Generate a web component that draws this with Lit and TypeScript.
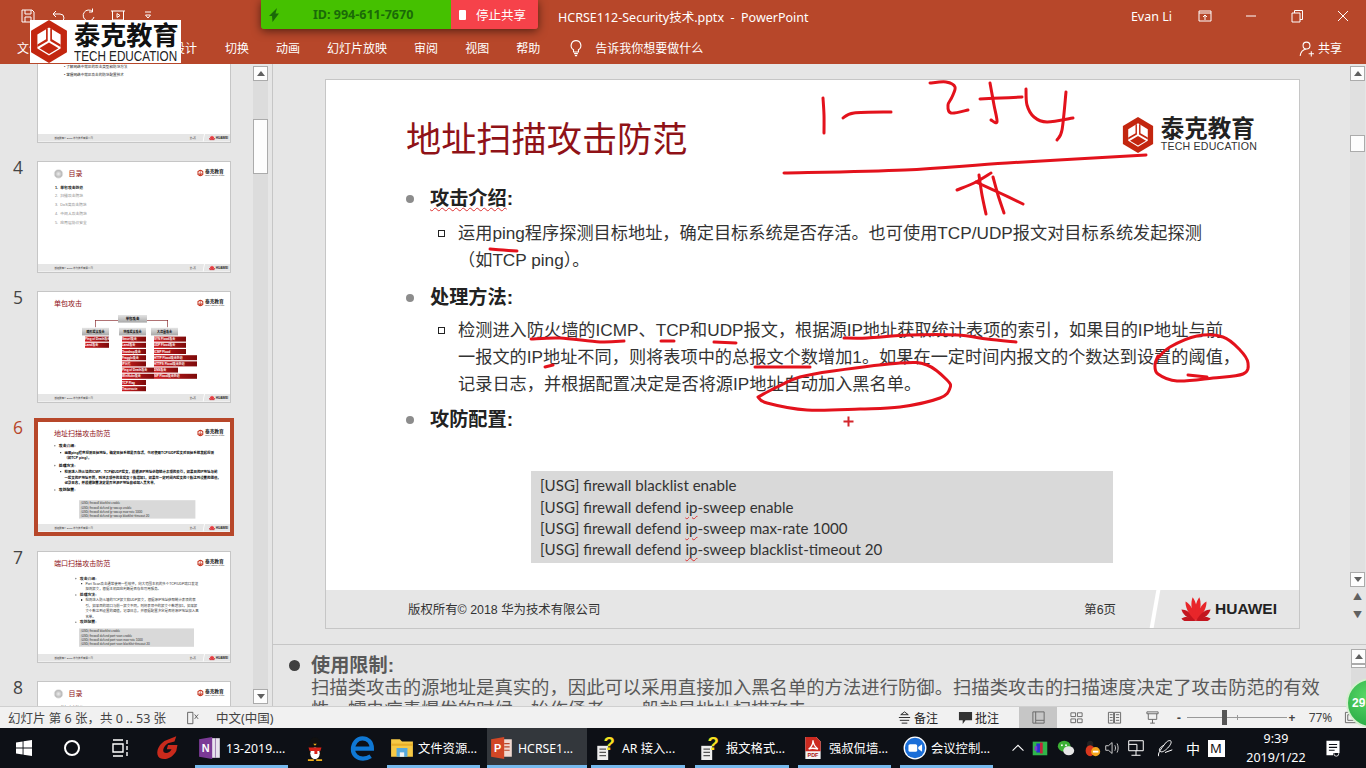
import { LitElement, html, css, svg } from 'lit';
import { customElement, property } from 'lit/decorators.js';

const SANS = css`'Liberation Sans', 'Noto Sans CJK SC', sans-serif`;

// ---- small svg helpers ----
const line = (d: string, size = 16, w = 1) => html`<svg width=${size} height=${size} viewBox="0 0 16 16" fill="none" stroke="currentColor" stroke-width=${w}><path d=${d}></path></svg>`;

const petals = [[-80, 8], [-52, 10], [-28, 12], [-8, 13], [8, 13], [28, 12], [52, 10], [80, 8]];
const huaweiMark = () => html`<svg class="flower" viewBox="-16 -24 32 24">
  ${petals.map(([a, l]) => svg`<path transform="rotate(${a})" d="M0 0C-4 -${l * 0.9} -2.600 -${l * 1.5} 0 -${l * 1.85}C2.600 -${l * 1.5} 4 -${l * 0.9} 0 0Z" fill=${Math.abs(a) > 40 ? '#c3161f' : '#e8262a'}></path>`)}
</svg>`;

const hexMark = () => html`<svg class="hex" viewBox="0 0 36 40" preserveAspectRatio="none">
  <path d="M18 0L35 10V30L18 40L1 30V10Z" fill="#c3260f"></path>
  <path d="M18 7L29 13.5V26.500L18 33L7 26.500V13.500Z" fill="#fff"></path>
  <path d="M16.800 8V19.500L7 25V22.800L15.200 18V8ZM19.200 8V19.500L29 25V22.800L20.800 18V8Z" fill="#c3260f"></path>
  <path d="M18 21L27 26.300L18 31.600L9 26.300Z" fill="#c3260f"></path>
</svg>`;

const brand = () => html`<div class="brand">${hexMark()}<div><div class="cn">泰克教育</div><div class="en">TECH EDUCATION</div></div></div>`;

// ---- one slide, used for the big canvas and for the thumbnails ----
const orgCols = [
  { head: '畸形报文攻击', w: [120, 120], items: ['Ping of Death攻击', 'Land攻击'] },
  { head: '特殊报文攻击', w: [120, 120, 120, 120, 120, 160, 160, 120, 120], items: ['Smurf攻击', 'Land攻击', 'Teardrop攻击', 'Fraggle攻击', 'IP分片', 'Ping of Death攻击', 'WinNuke攻击', 'TCP Flag', 'Traceroute'] },
  { head: '大流量攻击', w: [160, 160, 160, 215, 215, 120, 215], items: ['SYN Flood攻击', 'UDP Flood攻击', 'ICMP Flood', 'HTTP Flood攻击防范', 'HTTPS Flood攻击防范', 'DNS攻击', 'SIP Flood攻击防范'] },
];

@customElement('slide-view')
export class SlideView extends LitElement {
  @property() kind = 'main';
  @property({ type: Number }) page = 6;
  @property({ type: Boolean, reflect: true }) heavy = false;

  static styles = css`
    :host { display: block; }
    .slide { width: 973px; height: 548px; background: #fff; display: flex; flex-direction: column; font-family: ${SANS}; color: #2e2e2e; }
    .head { height: 105px; flex: none; display: flex; justify-content: space-between; align-items: center; padding: 0 42px 0 80px; box-sizing: border-box; }
    h1 { margin: 14px 0 0; font-size: 35.200px; font-weight: 400; color: #8f1217; line-height: 48px; }
    .brand { display: flex; align-items: center; gap: 7px; margin-top: 4px; }
    .hex { width: 32px; height: 36px; display: block; }
    .cn { font-size: 23.500px; font-weight: 700; color: #222; line-height: 24px; }
    .en { font-size: 10.600px; color: #333; line-height: 11px; letter-spacing: 0.2px; white-space: nowrap; }
    .body { flex: 1; min-height: 0; padding-left: 80px; }
    .t { position: relative; font-size: 19.200px; font-weight: 700; line-height: 27px; padding-left: 24px; color: #222; }
    .t::before { content: ''; position: absolute; left: 0; top: 10px; width: 8px; height: 8px; border-radius: 50%; background: #8c8c8c; }
    .p { position: relative; font-size: 17.200px; line-height: 27.300px; padding-left: 52px; color: #333; white-space: nowrap; }
    .p::before { content: ''; position: absolute; left: 32px; top: 10px; width: 5px; height: 5px; border: 1.500px solid #222; }
    :host([heavy]) .p, :host([heavy]) .t { font-weight: 700; color: #000; }
    .mt8 { margin-top: 8px; }
    .mt9 { margin-top: 9px; }
    .mt6 { margin-top: 6px; }
    .sp { text-decoration: underline wavy #d33; text-decoration-thickness: 1px; text-underline-offset: 2px; }
    .code { margin: 0 0 0 125px; width: 582px; height: 92px; box-sizing: border-box; padding: 4px 9px; background: #d9d9d9; font: 15.100px/21.300px Lato, 'Liberation Sans', sans-serif; color: #333; }
    .foot { height: 38px; flex: none; margin-top: auto; display: flex; align-items: center; background: #e6e6e6; padding: 0 22px 0 82px; font-size: 12.400px; color: #333; box-sizing: border-box; }
    .pg { margin-left: auto; margin-right: 37px; }
    .slash { width: 4px; height: 38px; background: #fff; transform: skewX(-10deg); margin-right: 23px; }
    .flower { width: 32px; height: 24px; display: block; }
    .hw { font-weight: 700; font-size: 15.500px; margin-left: 3px; color: #222; }
    .gap { margin-top: 38px; }
    .narrow { padding: 14px 0 0 185px; }
    .narrow .code { margin: 18px 0 0 20px; width: 575px; }
    .narrow .p { white-space: normal; width: 570px; }
    .toc { display: flex; align-items: center; gap: 28px; margin-top: 14px; }
    .toc i { display: block; width: 45px; height: 45px; border-radius: 50%; background: radial-gradient(#eee, #999); border: 3px solid #ccc; box-sizing: border-box; }
    .toc h1 { margin: 0; font-size: 35px; }
    .items { padding: 0 0 0 85px; font-size: 19px; line-height: 44px; color: #888; }
    .items div:first-child { color: #111; font-weight: 700; }
    .intro { padding: 155px 0 0 130px; font-size: 18px; line-height: 40px; color: #222; }
    .org { position: relative; padding: 10px 0 0 220px; }
    .org .rail { position: absolute; left: 285px; top: 35px; width: 365px; height: 36px; border: 3px solid #7c1418; border-bottom: 0; box-sizing: border-box; }
    .org .root, .org .hd { background: linear-gradient(#e4e4e4, #a8a8a8); font-size: 17px; font-weight: 700; color: #000; text-align: center; line-height: 38px; position: relative; }
    .org .root { width: 145px; margin: 0 0 26px 180px; }
    .cols { display: flex; gap: 50px; }
    .col { width: 135px; }
    .col:nth-child(2) { margin-right: -25px; }
    .col .hd { margin-bottom: 6px; white-space: nowrap; font-size: 15px; }
    .bar { height: 25px; margin: 0 0 6px 15px; background: linear-gradient(90deg, #d11f24, #7d0a0a); color: #fff; font-size: 15px; line-height: 25px; font-weight: 700; white-space: nowrap; overflow: hidden; }
  `;

  private foot() {
    return html`<div class="foot">
      <span>版权所有© 2018 华为技术有限公司</span><span class="pg">第${this.page}页</span><div class="slash"></div>
      ${huaweiMark()}<span class="hw">HUAWEI</span>
    </div>`;
  }

  private mainBody() {
    return html`<div class="body">
      <div class="t"><span class="sp">攻击介绍</span>:</div>
      <div class="p mt8">运用ping程序探测目标地址，确定目标系统是否存活。也可使用TCP/UDP报文对目标系统发起探测<br />（如TCP ping）。</div>
      <div class="t mt9">处理方法:</div>
      <div class="p mt6">检测进入防火墙的ICMP、TCP和UDP报文，根据源IP地址获取统计表项的索引，如果目的IP地址与前<br />一报文的IP地址不同，则将表项中的总报文个数增加1。如果在一定时间内报文的个数达到设置的阈值，<br />记录日志，并根据配置决定是否将源IP地址自动加入黑名单。</div>
      <div class="t mt8">攻防配置:</div>
      <div class="code gap">
        <div>[USG] firewall blacklist enable</div>
        <div>[USG] firewall defend <span class="sp">ip</span>-sweep enable</div>
        <div>[USG] firewall defend <span class="sp">ip</span>-sweep max-rate 1000</div>
        <div>[USG] firewall defend <span class="sp">ip</span>-sweep blacklist-timeout 20</div>
      </div>
    </div>`;
  }

  private portBody() {
    return html`<div class="body narrow">
      <div class="t">攻击介绍:</div>
      <div class="p">Port Scan攻击通常使用一些软件，向大范围主机的多个TCP/UDP端口发送探测报文，根据主机回应判断是否存在可用服务。</div>
      <div class="t">处理方法:</div>
      <div class="p">检测进入防火墙的TCP报文和UDP报文，根据源IP地址获取统计表项的索引，如果目的端口与前一报文不同，则将表项中的报文个数增加1，如果报文个数达到设置的阈值，记录日志，并根据配置决定是否将源IP地址加入黑名单。</div>
      <div class="t">攻防配置:</div>
      <div class="code">
        <div>[USG] firewall blacklist enable</div>
        <div>[USG] firewall defend port-scan enable</div>
        <div>[USG] firewall defend port-scan max-rate 1000</div>
        <div>[USG] firewall defend port-scan blacklist-timeout 20</div>
      </div>
    </div>`;
  }

  private orgBody() {
    return html`<div class="body" style="padding-left:0"><div class="org">
      <div class="rail"></div>
      <div class="root">单包攻击</div>
      <div class="cols">
        ${orgCols.map((c) => html`<div class="col"><div class="hd">${c.head}</div>
          ${c.items.map((it, i) => html`<div class="bar" style="width:${c.w[i]}px">${it}</div>`)}</div>`)}
      </div>
    </div></div>`;
  }

  render() {
    const k = this.kind;
    const titles: Record<string, string> = { main: '地址扫描攻击防范', port: '端口扫描攻击防范', org: '单包攻击' };
    return html`<div class="slide">
      ${k === 'intro'
        ? html`<div class="intro"><div>• 了解网络中常见的攻击类型和防范方法</div><div>• 掌握网络中常见攻击的防范配置技术</div></div>`
        : html`<div class="head">
            ${k === 'toc' ? html`<div class="toc"><i></i><h1>目录</h1></div>` : html`<h1>${titles[k]}</h1>`}
            ${brand()}
          </div>`}
      ${k === 'main' ? this.mainBody() : ''}
      ${k === 'port' ? this.portBody() : ''}
      ${k === 'org' ? this.orgBody() : ''}
      ${k === 'toc' ? html`<div class="items"><div>1.&nbsp;&nbsp;单包攻击防范</div><div>2.&nbsp;&nbsp;扫描攻击防范</div><div>3.&nbsp;&nbsp;DoS类攻击防范</div><div>4.&nbsp;&nbsp;中间人攻击防范</div><div>5.&nbsp;&nbsp;应用层协议安全</div></div>` : ''}
      ${this.foot()}
    </div>`;
  }
}

// ---- handwritten pen strokes over the slide ----
const ink: number[][][] = [
  [[823, 98], [824, 115], [824, 133]],
  [[843, 118], [854, 113], [891, 112]],
  [[930, 83], [946, 82], [955, 87], [952, 97], [948, 105], [951, 113], [968, 110]],
  [[980, 99], [1001, 98], [1022, 97]],
  [[990, 83], [994, 105], [997, 122], [991, 120]],
  [[1026, 89], [1027, 105], [1034, 117], [1047, 122], [1073, 118]],
  [[1066, 92], [1062, 130], [1057, 140]],
  [[784, 173], [905, 170], [1007, 163], [1146, 155]],
  [[957, 190], [976, 182], [991, 173]],
  [[979, 175], [982, 195], [986, 214]],
  [[993, 177], [998, 195], [1004, 213]],
  [[976, 182], [1000, 193], [1023, 204]],
  [[490, 249], [503, 250], [517, 251]],
  [[531, 339], [560, 338], [600, 342], [624, 341]],
  [[661, 341], [674, 341]],
  [[714, 342], [736, 343]],
  [[545, 367], [553, 365]],
  [[755, 367], [782, 367], [810, 367]],
  [[844, 338], [867, 338], [910, 335], [957, 335], [987, 339], [1016, 342]],
  [[758, 397], [777, 387], [800, 377], [833, 371], [900, 363], [927, 365], [947, 380], [950, 388], [940, 398], [900, 407], [860, 409], [807, 410], [767, 403], [758, 397]],
  [[1158, 358], [1170, 347], [1197, 336], [1223, 337], [1240, 350], [1248, 363], [1243, 374], [1213, 378], [1177, 381], [1158, 374], [1155, 365], [1158, 356]],
  [[1188, 375], [1207, 377]],
];

// catmull-rom through the sampled pen points
const smooth = (p: number[][]) => {
  let d = `M${p[0][0]} ${p[0][1]}`;
  for (let i = 0; i < p.length - 1; i++) {
    const a = p[Math.max(i - 1, 0)], b = p[i], c = p[i + 1], e = p[Math.min(i + 2, p.length - 1)];
    d += `C${b[0] + (c[0] - a[0]) / 6} ${b[1] + (c[1] - a[1]) / 6} ${c[0] - (e[0] - b[0]) / 6} ${c[1] - (e[1] - b[1]) / 6} ${c[0]} ${c[1]}`;
  }
  return d;
};

// ---- taskbar icons ----
const ic = (body: unknown, s = 22) => html`<svg width=${s} height=${s} viewBox="0 0 22 22">${body}</svg>`;
const icons: Record<string, unknown> = {
  win: ic(svg`<path fill="#fff" d="M3 5.500L9.600 4.500V10.600H3ZM10.500 4.300L19 3V10.600H10.500ZM3 11.400H9.600V17.500L3 16.500ZM10.500 11.400H19V19L10.500 17.700Z"/>`),
  cortana: ic(svg`<circle cx="11" cy="11" r="7" fill="none" stroke="#fff" stroke-width="2"/>`),
  tasks: ic(svg`<path fill="none" stroke="#fff" stroke-width="1.400" d="M4 3H14M4 19H14M4 7H14V15H4ZM18 3V7M18 9V13M18 15V19"/>`),
  gee: ic(svg`<path fill="#c92a1c" d="M18 1L8 5C2 9 0 16 4 19.500C9 22 15 19 18 13.500L19 8.500H11L10 12H14C13 15 9 16 7.500 14.500C6 12.500 8 9 11 7L16.500 5.500Z"/>`, 26),
  onenote: ic(svg`<rect x="9" y="2" width="11" height="18" fill="#e8e3ee"/><path d="M12 2V20M16 2V20" stroke="#7a4b92" stroke-width="0.600"/><path fill="#7b3a96" d="M1 3L13 1V21L1 19Z"/><text x="7" y="15" font-size="10" font-weight="700" fill="#fff" font-family="Liberation Sans" text-anchor="middle">N</text>`, 24),
  qq: ic(svg`<ellipse cx="11" cy="8" rx="5" ry="6" fill="#111"/><ellipse cx="11" cy="15" rx="6" ry="6" fill="#111"/><ellipse cx="11" cy="15.500" rx="4" ry="5" fill="#fff"/><path fill="#d9241b" d="M5.500 10.500H16.500L15.500 13.500H13V16H10.500V13.500H6.500Z"/><path fill="#f3b21b" d="M5 20.500H10V22H5ZM12 20.500H17V22H12ZM9.500 7.500H12.500L11 9Z"/>`, 26),
  edge: ic(svg`<path fill="none" stroke="#0f78d4" stroke-width="3.600" d="M3.500 11.500H18.500C18.500 6 15 2.800 10.500 2.800C6 2.800 2.500 7 2.500 12C2.500 17 6.500 20 11 20C13.500 20 15.500 19.300 17.500 18"/>`, 26),
  folder: ic(svg`<path fill="#f6c945" d="M1 3H9L11 5H21V19H1Z"/><path fill="#e6ae2a" d="M1 7H21V9H1Z"/><rect x="6" y="11" width="10" height="8" fill="#56a9dc"/><rect x="9" y="15" width="4" height="4" fill="#f3f3f3"/>`, 24),
  ppt: ic(svg`<rect x="9" y="3" width="11" height="16" fill="#f0d8cf"/><path d="M13 7H18M13 10H18M13 13H18" stroke="#b7472a"/><path fill="#d24726" d="M1 3L13 1V21L1 19Z"/><text x="7" y="15" font-size="10" font-weight="700" fill="#fff" font-family="Liberation Sans" text-anchor="middle">P</text>`, 24),
  help: ic(svg`<rect x="3" y="9" width="10" height="13" fill="#eee"/><path d="M5 12H11M5 15H11M5 18H11" stroke="#555"/><text x="14" y="13" font-size="17" font-weight="700" fill="#f7e021" font-family="Liberation Sans" text-anchor="middle">?</text>`, 24),
  pdf: ic(svg`<path fill="#f4f4f4" d="M4 1H14L18 5V21H4Z"/><path fill="#cc2a20" d="M4 1H14L18 5V14H4Z"/><path fill="none" stroke="#fff" stroke-width="1.200" d="M7 12C10 10 11 6 11 4C11 7 13 10 15.500 12C12 11 9 11 7 12Z"/><text x="11" y="19.500" font-size="5" font-weight="700" fill="#a11" font-family="Liberation Sans" text-anchor="middle">PDF</text>`, 24),
  zoom: ic(svg`<circle cx="11" cy="11" r="10.500" fill="#fff"/><circle cx="11" cy="11" r="9.300" fill="#1a6ed8"/><rect x="5" y="7.500" width="8" height="7" rx="1.500" fill="#fff"/><path fill="#fff" d="M14 10L17.500 7.500V14.500L14 12Z"/>`, 24),
  up: ic(svg`<path fill="none" stroke="#fff" stroke-width="1.200" d="M5 14L11 8L17 14"/>`, 20),
  mosaic: ic(svg`<rect x="3" y="4" width="16" height="15" fill="#2fb64a"/><rect x="7" y="6" width="4" height="10" fill="#2a2fd0"/><rect x="11" y="5" width="3" height="12" fill="#c6243c"/><rect x="5" y="9" width="3" height="5" fill="#7f3bd0"/>`, 20),
  wechat: ic(svg`<ellipse cx="9" cy="9" rx="7" ry="6" fill="#3cb034"/><ellipse cx="14" cy="14" rx="6" ry="5" fill="#e6e6e6"/><circle cx="6.500" cy="8" r="1" fill="#fff"/><circle cx="11" cy="8" r="1" fill="#fff"/>`, 20),
  qqs: ic(svg`<ellipse cx="9" cy="7" rx="3.500" ry="4" fill="#222"/><ellipse cx="9" cy="14" rx="5" ry="6" fill="#d9381e"/><circle cx="15" cy="15" r="5" fill="#f3a51c"/><rect x="12" y="14" width="6" height="2" fill="#fff"/>`, 20),
  vol: ic(svg`<path fill="none" stroke="#ddd" d="M3 8.500H6L10 5V17L6 13.500H3ZM13 8C14 10 14 12 13 14M15.500 6C17 9 17 13 15.500 16"/>`, 20),
  net: ic(svg`<path fill="none" stroke="#fff" stroke-width="1.100" d="M3 3H19V14H3ZM11 14V19M6 19H16M3 7H12V14"/>`, 20),
  pen: ic(svg`<path fill="none" stroke="#fff" stroke-width="1.100" d="M4 20C3 17 6 13 9 9C11 6 14 2 17 3C19 4 17 8 14 11C11 14 7 17 5 14C4 12 7 9 10 8M11 16L19 13"/>`, 20),
  note: ic(svg`<path fill="#fff" d="M3 2H19V17H11V20H3ZM6 6V7.400H16V6ZM6 9.500V10.900H16V9.500ZM6 13V14.400H13V13Z"/><circle cx="15" cy="18" r="3" fill="none" stroke="#fff"/>`, 20),
};

const apps = [
  { i: 'win', w: 48 }, { i: 'cortana', w: 48 }, { i: 'tasks', w: 48 }, { i: 'gee', w: 48 },
  { i: 'onenote', w: 93, ml: 3, label: '13-2019....' },
  { i: 'qq', w: 48, ml: 3 }, { i: 'edge', w: 48 },
  { i: 'folder', w: 93, ml: 0, label: '文件资源...' },
  { i: 'ppt', w: 100, ml: 7, label: 'HCRSE1...', active: true },
  { i: 'help', w: 94, ml: 4, label: 'AR 接入...' },
  { i: 'help', w: 94, ml: 10, label: '报文格式...' },
  { i: 'pdf', w: 93, ml: 9, label: '强叔侃墙...' },
  { i: 'zoom', w: 93, ml: 9, label: '会议控制...' },
];
const tray = [['up', 24], ['mosaic', 20], ['wechat', 32], ['qqs', 20], ['vol', 22], ['net', 24], ['pen', 34]] as [string, number][];
const tabs = ['文件', '开始', '插入', '设计', '切换', '动画', '幻灯片放映', '审阅', '视图', '帮助'];

@customElement('app-root')
export class AppRoot extends LitElement {
  static styles = css`
    :host { display: block; position: relative; width: 1366px; height: 768px; overflow: hidden; font-family: 'Noto Sans', 'Noto Sans CJK SC', sans-serif; background: #e6e6e6; }

    /* title bar and ribbon tabs */
    .bar { height: 64px; background: #b7472a; color: #fff; font-size: 12.500px; }
    .row1 { height: 32px; display: flex; align-items: center; position: relative; }
    .qat { display: flex; gap: 14px; padding-left: 20px; width: 550px; box-sizing: border-box; }
    .doc { margin-left: 8px; white-space: nowrap; }
    .who { margin-left: auto; margin-right: 10px; }
    .win { width: 46px; height: 32px; display: flex; align-items: center; justify-content: center; }
    .row2 { height: 32px; display: flex; align-items: center; padding-left: 17px; white-space: nowrap; font-size: 12px; }
    .tab { margin-right: 27px; }
    .tab:nth-child(-n+4) { margin-right: 28px; }
    .tell { display: flex; align-items: center; gap: 10px; }
    .share { margin-left: auto; margin-right: 24px; display: flex; align-items: center; gap: 3px; }

    /* panes */
    .main { height: 642px; display: flex; }
    .left { width: 273px; flex: none; box-sizing: border-box; border-right: 1px solid #c6c6c6; display: flex; overflow: hidden; }
    .list { width: 253px; margin-top: -33px; flex: none; }
    .item { display: flex; height: 112px; margin-bottom: 18px; }
    .num { width: 37px; flex: none; padding: 0 0 0 13px; box-sizing: border-box; font: 17.500px/12px 'Open Sans', sans-serif; color: #444; }
    .thumb { width: 194px; height: 112px; box-sizing: border-box; border: 1px solid #c6c6c6; background: #fff; overflow: hidden; }
    .on .num { color: #b7472a; }
    .on .thumb { outline: 3px solid #b7472a; outline-offset: 0; border-color: #b7472a; }
    .scale { width: 973px; height: 548px; transform: scale(0.2); transform-origin: 0 0; }

    .sb { width: 15px; flex: none; background: #dcdcdc; display: flex; flex-direction: column; margin: 2px 0; }
    .left .sb { margin-right: 4px; }
    .btn { height: 15px; width: 15px; box-sizing: border-box; background: #fdfdfd; border: 1px solid #ababab; display: flex; align-items: center; justify-content: center; flex: none; }
    .up::after { content: ''; border: 4px solid transparent; border-top: 0; border-bottom: 5px solid #606060; }
    .dn::after { content: ''; border: 4px solid transparent; border-bottom: 0; border-top: 5px solid #606060; }
    .grip { background: #fdfdfd; border: 1px solid #ababab; box-sizing: border-box; flex: none; }

    .right { flex: 1; min-width: 0; display: flex; flex-direction: column; }
    .stage { height: 581px; box-sizing: border-box; border-bottom: 1px solid #c6c6c6; display: flex; }
    .canvas { flex: 1; padding: 15px 0 0 52px; }
    .big { width: 973px; height: 548px; border: 1px solid #c6c6c6; }
    .stage .sb { margin: 2px 1px 1px 0; background: #e0e0e0; }
    .hop { height: 56px; flex: none; background: #e6e6e6; color: #606060; font-size: 9px; line-height: 18px; text-align: center; padding-top: 1px; box-sizing: border-box; }

    .notes { flex: 1; display: flex; min-height: 0; overflow: hidden; }
    .ntext { flex: 1; padding: 10px 0 0 38px; font: 18.350px/22px 'Liberation Sans', 'Noto Sans CJK SC', sans-serif; color: #595959; white-space: nowrap; }
    .ntext b { display: block; position: relative; font-size: 19.200px; }
    .ntext b::before { content: ''; position: absolute; left: -22px; top: 5px; width: 11px; height: 11px; border-radius: 50%; background: #404040; }

    /* status bar */
    .status { height: 22px; box-sizing: border-box; background: #f1f1f1; border-top: 1px solid #cfcfcf; display: flex; align-items: center; font-size: 12.500px; color: #444; padding-left: 8px; white-space: nowrap; }
    .spell { margin: 0 17px 0 19px; color: #555; display: flex; }
    .sright { margin-left: auto; display: flex; align-items: center; height: 100%; font-size: 12px; }
    .sbtn { display: flex; align-items: center; gap: 2px; margin-right: 20px; color: #222; }
    .view { width: 38px; height: 100%; display: flex; align-items: center; justify-content: center; color: #666; }
    .view.cur { background: #c6c6c6; }
    .zm { width: 100px; height: 1px; background: #999; position: relative; }
    .zm::before { content: ''; position: absolute; left: 35px; top: -7px; width: 5px; height: 15px; background: #555; }
    .zm::after { content: ''; position: absolute; left: 50px; top: -2px; width: 1px; height: 5px; background: #999; }
    .pm { width: 16px; text-align: center; font-weight: 700; }
    .pct { width: 47px; text-align: center; }
    .fit { width: 22px; display: flex; color: #666; }

    /* taskbar */
    .task { height: 40px; background: #0d1016; display: flex; color: #fff; font-size: 12.300px; white-space: nowrap; }
    .app { height: 40px; flex: none; display: flex; align-items: center; justify-content: center; gap: 4px; box-sizing: border-box; }
    .app.lab { border-bottom: 3px solid #76b9ed; justify-content: flex-start; padding: 3px 0 0 3px; }
    .app.act { background: #33373c; }
    .tray { margin-left: auto; margin-right: 24px; display: flex; align-items: center; }
    .ti { display: flex; justify-content: center; align-items: center; flex: none; height: 40px; font-size: 14px; }
    .m { border: 1px solid #fff; background: #fff; color: #111; width: 15px; height: 15px; line-height: 15px; text-align: center; font-size: 13px; }
    .clock { width: 96px; text-align: center; line-height: 19px; font-size: 12.500px; }

    /* what lies on top of the window */
    .meet { position: absolute; left: 261px; top: 0; width: 277px; height: 29px; display: flex; border-radius: 0 0 3px 3px; overflow: hidden; box-shadow: 0 2px 10px rgba(0, 0, 0, 0.55); font-size: 12.500px; }
    .mid { width: 190px; background: #45c100; color: #1a6a08; display: flex; align-items: center; font-weight: 700; }
    .mid svg { margin: 0 32px 0 6px; }
    .mstop { flex: 1; background: #f6424a; color: #fff; display: flex; align-items: center; gap: 10px; padding-left: 8px; }
    .mstop i { width: 7px; height: 10px; background: #fff; border-radius: 1px; }
    .stamp { position: absolute; left: 30px; top: 20px; width: 151px; height: 43px; background: #fff; display: flex; gap: 6px; align-items: center; overflow: hidden; }
    .stamp .hex { width: 38px; height: 43px; flex: none; }
    .stamp .c { font: 700 26.200px/27px 'Noto Sans CJK SC', sans-serif; color: #111; white-space: nowrap; }
    .stamp .e { font: 15px/15px 'Liberation Sans', sans-serif; color: #222; white-space: nowrap; transform: scaleX(0.78); transform-origin: 0 0; }
    .pen { position: absolute; inset: 0; pointer-events: none; }
    .ball { position: absolute; left: 1346px; top: 678px; width: 50px; height: 50px; box-sizing: border-box; border-radius: 50%; border: 2px solid #d6efd0; background: radial-gradient(circle at 40% 35%, #58d766, #1b9e3c); color: #fff; font: 700 12px/46px 'Liberation Sans', sans-serif; padding-left: 4px; }
  `;

  private scroll(top: number, h: number, extra: unknown = '') {
    return html`<div class="sb">
      <div class="btn up"></div>
      <div class="grip" style="margin-top:${top}px;height:${h}px"></div>
      <div style="flex:1"></div>
      <div class="btn dn"></div>
      ${extra}
    </div>`;
  }

  render() {
    const thumbs = [['intro', 3], ['toc', 4], ['org', 5], ['main', 6], ['port', 7], ['toc', 8]] as [string, number][];
    return html`
      <div class="bar">
        <div class="row1">
          <div class="qat">
            ${line('M2 2H12L14 4V14H2ZM5 2V6H11V2M5 14V9H11V14')}
            ${line('M3 6H10A4 4 0 0 1 10 14H7M6 3L3 6L6 9')}
            ${line('M12.500 3.500A5.500 5.500 0 1 0 14 9M12.500 0.500V4H9')}
            ${line('M1 3H15M2.500 3V12H13.500V3M7 5.500L10 7.500L7 9.500Z')}
            ${line('M5 4H11M5.500 7H10.500L8 10Z', 16)}
          </div>
          <span class="doc">HCRSE112-Security技术.pptx&nbsp; -&nbsp; PowerPoint</span>
          <span class="who">Evan Li</span>
          <div class="win">${line('M2 3H14V13H2ZM2 5H14M8 12V7M6 9L8 7L10 9', 16)}</div>
          <div class="win">${line('M3 8H13', 16)}</div>
          <div class="win">${line('M3 5H11V14H3ZM5.500 5V2.500H13.500V11.500H11', 16)}</div>
          <div class="win">${line('M3 3L13 13M13 3L3 13', 16)}</div>
        </div>
        <div class="row2">
          ${tabs.map((t) => html`<span class="tab">${t}</span>`)}
          <span class="tell">${line('M8 1.500A4.300 4.300 0 0 0 5.800 9.500V11.500H10.200V9.500A4.300 4.300 0 0 0 8 1.500ZM6.300 13H9.700M7 14.800H9', 18)}告诉我你想要做什么</span>
          <span class="share">${line('M8 2A3.200 3.200 0 1 0 8 8.500A3.200 3.200 0 1 0 8 2ZM2 15C2.500 11 5 9 8 8.500M10 13H15M12.500 10.500V15.500', 17)}共享</span>
        </div>
      </div>

      <div class="main">
        <div class="left">
          <div class="list">
            ${thumbs.map(([k, n]) => html`<div class="item ${n === 6 ? 'on' : ''}">
              <div class="num">${n === 3 ? '' : n}</div>
              <div class="thumb"><div class="scale"><slide-view kind=${k} page=${n} ?heavy=${k === 'main'}></slide-view></div></div>
            </div>`)}
          </div>
          ${this.scroll(38, 55)}
        </div>
        <div class="right">
          <div class="stage">
            <div class="canvas"><div class="big"><slide-view kind="main" page="6"></slide-view></div></div>
            ${this.scroll(54, 17, html`<div class="hop">▲<br />▼</div>`)}
          </div>
          <div class="notes">
            <div class="ntext">
              <b>使用限制:</b>
              扫描类攻击的源地址是真实的，因此可以采用直接加入黑名单的方法进行防御。扫描类攻击的扫描速度决定了攻击防范的有效<br />性。蠕虫病毒爆发的时候，始作俑者，一般就是地址扫描攻击。
            </div>
            <div class="sb" style="margin:4px 0 0">
              <div class="btn up"></div><div class="grip" style="height:4px"></div>
            </div>
          </div>
        </div>
      </div>

      <div class="status">
        <span>幻灯片 第 6 张，共 0 .. 53 张</span>
        <span class="spell">${line('M3 1.500H9V14.500H3ZM11 4L15 9M15 4L11 9', 14)}</span>
        <span>中文(中国)</span>
        <div class="sright">
          <span class="sbtn">${line('M4 5L8 2L12 5ZM2 8H14M3 11H13M5 14H11', 15)}备注</span>
          <span class="sbtn"><svg width="15" height="15" viewBox="0 0 16 16" fill="#333"><path d="M1 2H15V11H8L5 15V11H1Z"></path></svg>批注</span>
          <div class="view cur">${line('M2 2H14V14H2ZM5 2V11H14M5 11V14', 15)}</div>
          <div class="view">${line('M2 3H7V7H2ZM9 3H14V7H9ZM2 9.500H7V13.500H2ZM9 9.500H14V13.500H9Z', 15)}</div>
          <div class="view">${line('M1.500 2.500H7V14H1.500ZM8 2.500H14.500V14H8ZM3 5H6M3 8H6M3 11H6M9.500 5H13M9.500 8H13M9.500 11H13', 15)}</div>
          <div class="view">${line('M2 2H14V4H2ZM3.500 4V10H12.500V4M8 10V14M5.500 14H10.500', 15)}</div>
          <span class="pm">-</span><div class="zm"></div><span class="pm" style="width:10px">+</span>
          <span class="pct">77%</span>
          <span class="fit">${line('M1.500 2.500H14.500V13.500H1.500ZM4 5H12V11H4Z', 15)}</span>
        </div>
      </div>

      <div class="task">
        ${apps.map((a) => html`<div class="app ${a.label ? 'lab' : ''} ${a.active ? 'act' : ''}" style="width:${a.w}px;margin-left:${a.ml ?? 0}px">
          ${icons[a.i]}${a.label ?? ''}
        </div>`)}
        <div class="tray">
          ${tray.map(([i, w]) => html`<div class="ti" style="width:${w}px">${icons[i]}</div>`)}
          <div class="ti" style="width:22px">中</div>
          <div class="ti" style="width:24px"><span class="m">M</span></div>
          <div class="clock">9:39<br />2019/1/22</div>
          <div class="ti" style="width:18px">${icons.note}</div>
        </div>
      </div>

      <div class="meet">
        <div class="mid"><svg width="14" height="16" viewBox="0 0 14 16" fill="#1a6a08"><path d="M10 1L8.500 6.500H12L5.500 15L5 9H2Z"></path></svg>ID: 994-611-7670</div>
        <div class="mstop"><i></i>停止共享</div>
      </div>

      <div class="stamp">
        ${hexMark()}
        <div><div class="c">泰克教育</div><div class="e">TECH EDUCATION</div></div>
      </div>

      <svg class="pen" width="1366" height="768" fill="none" stroke="#e3121c" stroke-width="3" stroke-linecap="round" stroke-linejoin="round">
        ${ink.map((s) => svg`<path d=${smooth(s)}></path>`)}
        <path d="M843.500 421.500H853.500M848.500 416.500V426.500" stroke="#d3262c" stroke-width="2" stroke-linecap="butt"></path>
      </svg>

      <div class="ball">29</div>
    `;
  }
}
